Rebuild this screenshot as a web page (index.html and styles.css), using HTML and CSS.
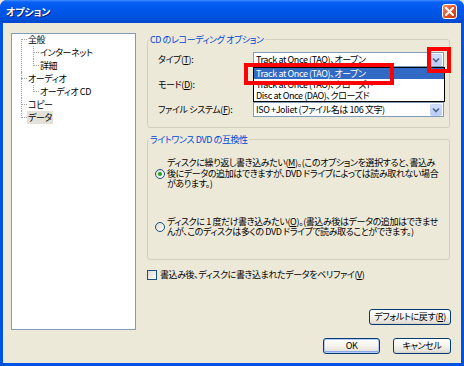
FILE: index.html
```html
<!DOCTYPE html>
<html lang="ja">
<head>
<meta charset="utf-8">
<title>オプション</title>
<link rel="stylesheet" href="styles.css">
</head>
<body>
<div class="window">
  <div class="titlebar">
    <span class="title">オプション</span>
    <span class="close"><svg width="9" height="9" viewBox="0 0 9 9"><path d="M1 1L8 8M8 1L1 8" stroke="#fff" stroke-width="2" stroke-linecap="square"/></svg></span>
  </div>
  <div class="client">
    <div class="main">
      <div class="tree">
        <ul>
          <li><span class="node">全般</span>
            <ul>
              <li><span class="node">インターネット</span></li>
              <li><span class="node">詳細</span></li>
            </ul>
          </li>
          <li><span class="node">オーディオ</span>
            <ul>
              <li><span class="node">オーディオ CD</span></li>
            </ul>
          </li>
          <li><span class="node">コピー</span></li>
          <li><span class="node sel">データ</span></li>
        </ul>
      </div>
      <div class="panel">
        <fieldset class="group g1">
          <legend>CD のレコーディング オプション</legend>
          <div class="row">
            <span class="lbl">タイプ(<u>T</u>):</span>
            <div class="combo">
              <span class="val">Track at Once (TAO)、オープン</span>
              <span class="drop"><svg width="8" height="6" viewBox="0 0 8 6"><path d="M1 1.5L4 4.5L7 1.5" fill="none" stroke="#4D6185" stroke-width="1.6"/></svg></span>
              <div class="list">
                <div class="item on">Track at Once (TAO)、オープン</div>
                <div class="item">Track at Once (TAO)、クローズド</div>
                <div class="item">Disc at Once (DAO)、クローズド</div>
              </div>
              <div class="mark mark-item"></div>
              <div class="mark mark-drop"></div>
            </div>
          </div>
          <div class="row">
            <span class="lbl">モード(<u>D</u>):</span>
            <div class="combo">
              <span class="val"></span>
              <span class="drop"><svg width="8" height="6" viewBox="0 0 8 6"><path d="M1 1.5L4 4.5L7 1.5" fill="none" stroke="#4D6185" stroke-width="1.6"/></svg></span>
            </div>
          </div>
          <div class="row">
            <span class="lbl">ファイル システム(<u>F</u>):</span>
            <div class="combo">
              <span class="val">ISO +Joliet (ファイル名は 106 文字)</span>
              <span class="drop"><svg width="8" height="6" viewBox="0 0 8 6"><path d="M1 1.5L4 4.5L7 1.5" fill="none" stroke="#4D6185" stroke-width="1.6"/></svg></span>
            </div>
          </div>
        </fieldset>
        <fieldset class="group g2">
          <legend>ライトワンス DVD の互換性</legend>
          <div class="opt">
            <span class="radio on"></span>
            <span class="opt-text">ディスクに繰り返し書き込みたい(<u>M</u>)。(このオプションを選択すると、書込み<br>後にデータの追加はできますが、DVD ドライブによっては読み取れない場合<br>があります。)</span>
          </div>
          <div class="opt opt2">
            <span class="radio"></span>
            <span class="opt-text">ディスクに 1 度だけ書き込みたい(<u>O</u>)。(書込み後はデータの追加はできませ<br>んが、このディスクは多くの DVD ドライブで読み取ることができます。)</span>
          </div>
        </fieldset>
        <div class="check">
          <span class="box"></span>
          <span>書込み後、ディスクに書き込まれたデータをベリファイ(<u>V</u>)</span>
        </div>
        <button class="xpbtn reset">デフォルトに戻す(<u>R</u>)</button>
      </div>
    </div>
    <div class="footer">
      <button class="xpbtn ok">OK</button>
      <button class="xpbtn cancel">キャンセル</button>
    </div>
  </div>
</div>
</body>
</html>
```

FILE: styles.css
```css
* { box-sizing: border-box; }
html, body { margin: 0; padding: 0; }
body {
  width: 464px;
  height: 366px;
  overflow: hidden;
  background: #ECE9D8;
  font-family: "Noto Sans CJK JP", sans-serif;
  font-size: 9px;
  letter-spacing: -0.4px;
  font-feature-settings: "palt";
  color: #000;
}
u { text-decoration: underline; text-underline-offset: 1px; }

.window {
  width: 464px;
  height: 366px;
  display: flex;
  flex-direction: column;
  background: #0052E3;
  border-radius: 7px 7px 0 0;
  overflow: hidden;
}
.titlebar {
  height: 23px;
  flex: none;
  display: flex;
  align-items: center;
  justify-content: space-between;
  padding: 0 7px 0 6px;
  background: linear-gradient(#3E8EFF 0, #0A62F4 2px, #0058EE 7px, #0054E6 14px, #004ED8 20px, #0046CC 23px);
}
.title {
  color: #fff;
  font-weight: bold;
  font-size: 10px;
  line-height: 12px;
  letter-spacing: -0.2px;
  text-shadow: 1px 1px 0 #0A1F78;
}
.close {
  width: 15px;
  height: 15px;
  border: 1px solid #fff;
  border-radius: 3px;
  background: linear-gradient(135deg, #F09A7A, #E2552F 45%, #C8380F);
  display: flex;
  align-items: center;
  justify-content: center;
}
.close svg { display: block; }

.client {
  flex: 1;
  margin: 0 3px 3px;
  background: #ECE9D8;
  padding: 10px 10px 9px 8px;
  display: flex;
  flex-direction: column;
  min-height: 0;
}
.main {
  display: flex;
  gap: 11px;
  height: 297px;
  flex: none;
}

/* tree */
.tree {
  width: 125px;
  flex: none;
  border: 1px solid #7F9DB9;
  background: #fff;
}
.tree ul { list-style: none; margin: 0; padding: 0 0 0 16px; }
.tree > ul { margin-top: -1px; }
.tree ul ul { padding-left: 12px; }
.tree li { position: relative; }
.tree li::before {
  content: "";
  position: absolute;
  left: -7px;
  top: 0;
  bottom: 0;
  border-left: 1px dotted #A0A0A0;
}
.tree > ul > li:first-child::before { top: 6px; }
.tree li:last-child::before { bottom: auto; height: 7px; }
.tree li::after {
  content: "";
  position: absolute;
  left: -7px;
  top: 6px;
  width: 6px;
  border-top: 1px dotted #A0A0A0;
}
.node {
  display: inline-block;
  line-height: 13px;
  white-space: nowrap;
}
.node.sel {
  background: #E3E1D8;
  margin-left: -1px;
  padding: 0 1px;
}

/* panel */
.panel {
  width: 304px;
  flex: none;
  min-width: 0;
  display: flex;
  flex-direction: column;
  padding-bottom: 5px;
}
.group {
  width: 303px;
  margin: 0;
  border: 1px solid #D0D0BF;
  border-radius: 3px;
  min-width: 0;
}
.group legend {
  color: #0046D5;
  line-height: 13px;
  padding: 0 1px;
  margin-left: -9px;
  white-space: nowrap;
}
.g1 { padding: 6px 5px 10px 10px; display: flex; flex-direction: column; gap: 10px; }
.g2 { margin-top: 5px; padding: 12px 5px 21px 7px; }
.g2 legend { margin-left: -6px; }

.row {
  display: grid;
  grid-template-columns: 95px 191px;
  align-items: center;
  height: 15px;
}
.lbl { white-space: nowrap; }
.combo {
  position: relative;
  width: 191px;
  height: 15px;
  border: 1px solid #7F9DB9;
  background: #fff;
  display: flex;
  align-items: center;
}
.val {
  flex: 1;
  min-width: 0;
  padding-left: 2px;
  white-space: nowrap;
  overflow: hidden;
  line-height: 13px;
}
.drop {
  width: 12px;
  height: 12px;
  flex: none;
  margin-right: 1px;
  border-radius: 2px;
  background: linear-gradient(#D2E0FD, #B8CCF8);
  border: 1px solid #C4D3F6;
  display: flex;
  align-items: center;
  justify-content: center;
}
.drop svg { display: block; }

.list {
  position: absolute;
  top: 14px;
  left: -1px;
  width: 192px;
  border: 1px solid #000;
  background: #fff;
  z-index: 2;
}
.item {
  line-height: 11px;
  height: 11px;
  padding-left: 2px;
  white-space: nowrap;
}
.item.on { background: #316AC5; color: #fff; }

.mark {
  position: absolute;
  border: 4px solid #FF0000;
  z-index: 3;
}
.mark-item { left: -10px; top: 10px; width: 150px; height: 22px; }
.mark-drop { left: 173px; top: -6px; width: 24px; height: 26px; }

/* radio options */
.opt {
  display: flex;
  align-items: center;
  gap: 2px;
}
.opt2 { margin-top: 27px; }
.opt-text {
  line-height: 10.5px;
  white-space: nowrap;
}
.radio {
  width: 10px;
  height: 10px;
  flex: none;
  border-radius: 50%;
  border: 1px solid #1C5180;
  background: linear-gradient(135deg, #DCD8CC, #FFFFFF);
  display: flex;
  align-items: center;
  justify-content: center;
}
.radio.on::after {
  content: "";
  width: 4px;
  height: 4px;
  border-radius: 50%;
  background: #21A21F;
}

.check {
  margin-top: 9px;
  display: flex;
  align-items: center;
  gap: 3px;
  line-height: 12px;
  white-space: nowrap;
}
.box {
  width: 10px;
  height: 10px;
  flex: none;
  border: 1px solid #1C5180;
  background: linear-gradient(135deg, #DCD8CC, #FFFFFF);
}

.xpbtn {
  height: 16px;
  padding: 0;
  border: 1px solid #003C74;
  border-radius: 3px;
  background: linear-gradient(#FFFFFF, #F5F4EF 45%, #E6E3DA 85%, #D6D0C5);
  font: inherit;
  letter-spacing: -0.4px;
  font-feature-settings: "palt";
  color: #000;
  line-height: 14px;
  white-space: nowrap;
  display: flex;
  align-items: center;
  justify-content: center;
}
.reset {
  margin-top: auto;
  align-self: flex-end;
  width: 82px;
}
.footer {
  margin-top: 8px;
  display: flex;
  justify-content: flex-end;
  gap: 13px;
}
.ok { width: 57px; box-shadow: inset 0 0 0 1px #B7CBF5, inset 0 -1px 0 1px #89A8EB; }
.cancel { width: 58px; }
```
